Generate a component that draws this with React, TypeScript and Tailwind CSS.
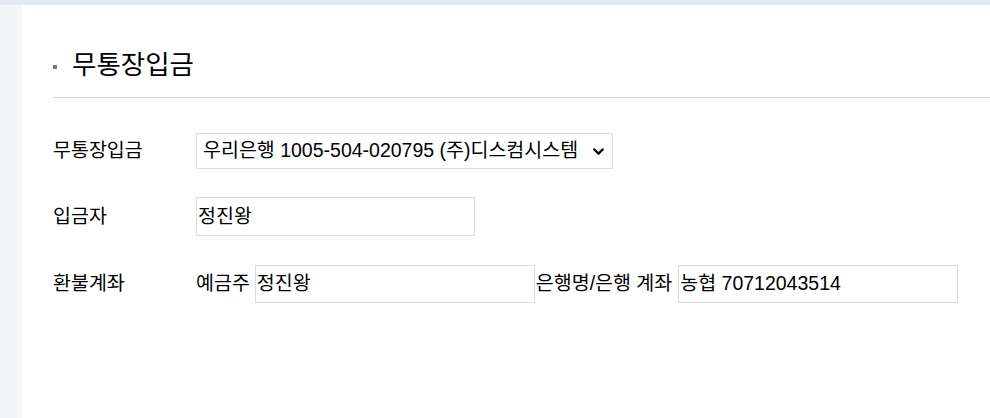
import { ChevronDown } from "lucide-react";

const font = "font-['Liberation_Sans','Noto_Sans_CJK_KR',sans-serif]";

const App = () => {
  return (
    <div className={`w-[990px] h-[418px] bg-white flex flex-col text-black ${font}`}>
      {/* Top band */}
      <div className="h-[5px] bg-[#e4e8f3]" />

      <div className="flex flex-1">
        {/* Left strip */}
        <div className="w-[22px] bg-[#f4f5f8]" />

        {/* Main content */}
        <div className="flex-1 pl-[31px]">
          {/* Title */}
          <div className="flex items-center pt-[43px] pb-[15px] border-b border-[#d6d6d6]">
            <span className="w-[4px] h-[4px] bg-[#777] mr-[15px] mt-[4px]" />
            <h2 className="text-[26.5px] leading-[34px] font-normal">무통장입금</h2>
          </div>

          {/* Form rows */}
          <div className="flex flex-col pt-[35px] gap-[28px] text-[19.5px]">
            <div className="flex items-center">
              <div className="w-[143px]">무통장입금</div>
              <div className="w-[417px] h-[36px] border border-[#dcdcdc] flex items-center justify-between pl-[6px] pr-[5px]">
                <span>우리은행 1005-504-020795 (주)디스컴시스템</span>
                <ChevronDown className="w-[17px] h-[17px]" strokeWidth={3} />
              </div>
            </div>

            <div className="flex items-center">
              <div className="w-[143px]">입금자</div>
              <div className="w-[279px] h-[39px] border border-[#dcdcdc] flex items-center pl-[1px]">
                정진왕
              </div>
            </div>

            <div className="flex items-center mt-[1px]">
              <div className="w-[143px]">환불계좌</div>
              <span className="mr-[5px]">예금주</span>
              <div className="w-[280px] h-[38px] border border-[#dcdcdc] flex items-center pl-[1px]">
                정진왕
              </div>
              <span className="ml-[1px] mr-[6px]">은행명/은행 계좌</span>
              <div className="w-[280px] h-[38px] border border-[#dcdcdc] flex items-center pl-[1px]">
                농협 70712043514
              </div>
            </div>
          </div>
        </div>
      </div>
    </div>
  );
};

export default App;
